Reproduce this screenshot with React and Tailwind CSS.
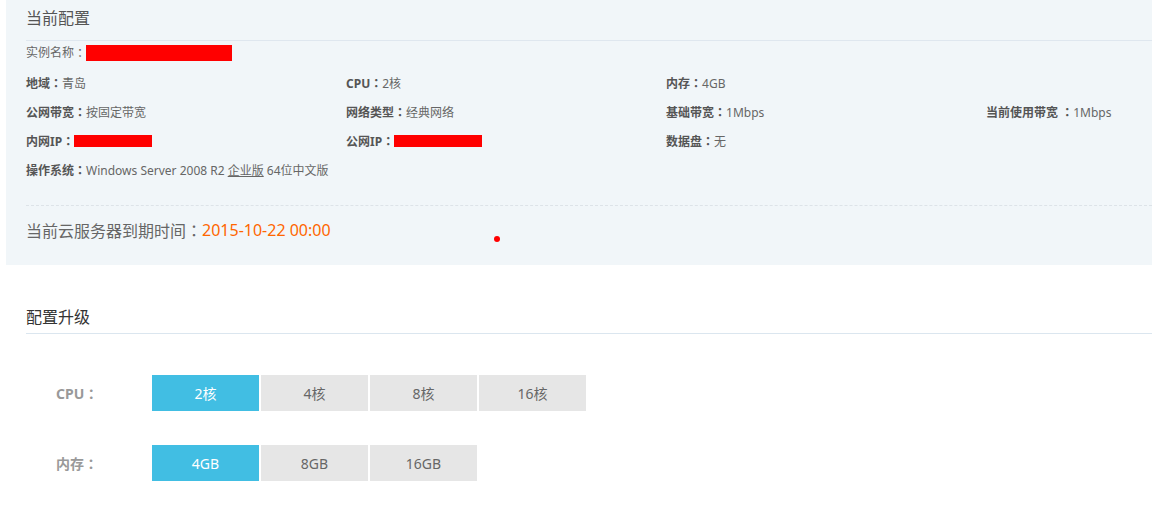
const font = { fontFamily: '"Noto Sans", "Noto Sans CJK SC", sans-serif' }

// centred full-width colon, like the YaHei one in the design
function Colon() {
  return <span className="font-['Noto_Sans_CJK_TC']">：</span>
}

function Redact({ w, h }) {
  return <span className={`inline-block bg-[#ff0000] ${w} ${h}`} />
}

function Field({ label, children }) {
  return (
    <div className="flex items-center h-[29px] text-[12px] leading-none whitespace-nowrap">
      <span className="font-bold text-[#555]">
        {label}
        <Colon />
      </span>
      <span className="text-[#666]">{children}</span>
    </div>
  )
}

function Options({ label, items, active }) {
  return (
    <div className="flex items-center h-[36px]">
      <div className="ml-[30px] w-[96px] text-[14px] font-bold text-[#999]">
        {label}
        <Colon />
      </div>
      <div className="flex gap-[2px]">
        {items.map((it) => (
          <div
            key={it}
            className={
              it === active
                ? 'w-[107px] h-[36px] flex items-center justify-center text-[14px] bg-[#41bee3] text-white'
                : 'w-[107px] h-[36px] flex items-center justify-center text-[14px] bg-[#e6e6e6] text-[#666]'
            }
          >
            {it}
          </div>
        ))}
      </div>
    </div>
  )
}

export default function App() {
  return (
    <div className="w-[1152px] h-[509px] bg-white overflow-hidden" style={font}>
      <div className="relative ml-[6px] h-[265px] bg-[#f1f6f9] pl-[20px]">
        <div className="h-[41px] border-b border-[#dfe7ef] flex items-center pb-[4px] text-[16px] text-[#555]">
          当前配置
        </div>
        <div className="h-[24px] flex items-center text-[12px] text-[#666]">
          实例名称<Colon />
          <Redact w="w-[146px]" h="h-[16px]" />
        </div>
        <div className="pt-[4px] grid grid-cols-[320px_320px_320px_1fr]">
          <Field label="地域">青岛</Field>
          <Field label="CPU">2核</Field>
          <Field label="内存">4GB</Field>
          <div />
          <Field label="公网带宽">按固定带宽</Field>
          <Field label="网络类型">经典网络</Field>
          <Field label="基础带宽">1Mbps</Field>
          <Field label="当前使用带宽 ">1Mbps</Field>
          <Field label="内网IP">
            <Redact w="w-[78px]" h="h-[12px]" />
          </Field>
          <Field label="公网IP">
            <Redact w="w-[88px]" h="h-[12px]" />
          </Field>
          <Field label="数据盘">无</Field>
          <div />
          <div className="col-span-4">
            <Field label="操作系统">
              Windows Server 2008 R2 <span className="underline">企业版</span> 64位中文版
            </Field>
          </div>
        </div>
        <div className="mt-[20px] border-t border-dashed border-[#dde3e8]" />
        <div className="pt-[14px] h-[20px] box-content flex items-center text-[16px] leading-[20px]">
          <span className="text-[#666]">
            当前云服务器到期时间<Colon />
          </span>
          <span className="text-[#ff6600]">2015-10-22 00:00</span>
        </div>
        <span className="absolute left-[488px] top-[236px] w-[6px] h-[6px] rounded-full bg-[#ff0000]" />
      </div>

      <div className="pl-[26px] pt-[35px]">
        <div className="h-[34px] border-b border-[#dbe6ef] flex items-center text-[16px] text-[#333]">
          配置升级
        </div>
        <div className="mt-[41px]">
          <Options label="CPU" items={['2核', '4核', '8核', '16核']} active="2核" />
        </div>
        <div className="mt-[34px]">
          <Options label="内存" items={['4GB', '8GB', '16GB']} active="4GB" />
        </div>
      </div>
    </div>
  )
}
